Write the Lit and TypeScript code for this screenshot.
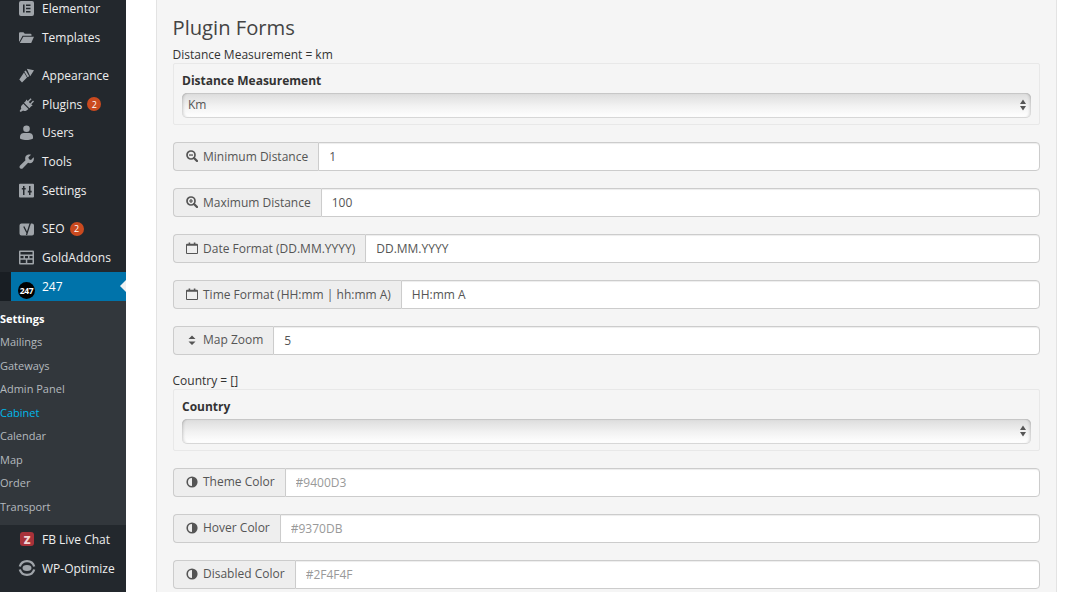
import { LitElement, html, css, svg } from "lit";
import { customElement } from "lit/decorators.js";

const menuIcons: Record<string, unknown> = {
  elementor: svg`<path fill-rule="evenodd" d="M2 0h11a2 2 0 0 1 2 2v11a2 2 0 0 1-2 2H2a2 2 0 0 1-2-2V2a2 2 0 0 1 2-2zM4 3.500v8h1.600v-8zM7 3.500v1.600h4.500V3.500zM7 6.700v1.600h4.500V6.700zM7 9.900v1.600h4.500V9.900z"/>`,
  templates: svg`<path d="M0 3.200a1 1 0 0 1 1-1h3.400l1.400 1.500h5.700a1 1 0 0 1 1 1v1.100H3.600L0.500 11.500H0zM4.300 6.800H15L12.200 13H0.800z"/>`,
  appearance: svg`<path d="M7.800 .8 15 2.300 11.200 8.200zM6.800 2.400 10.200 8.300 8.600 9.200 5.300 3.600zM5 4.500 8 9.500 3 14.500 .3 11.500z"/>`,
  plugins: svg`<path d="M12.600 2.200 9.800 5 11.200 6.400 14 3.600 15 4.600 12.300 7.300 13.700 8.700 12.200 9.300 10.400 11.200 5 5.800 6.800 4 7.400 2.500 8.800 3.900 11.600 1.200zM4.300 6.800 9.500 12 7.500 13.500C6 14.400 5 14.100 4.200 13.400L1.600 15 .6 14 2.300 11.500C1.800 10.700 1.800 9.700 2.600 8.600z"/>`,
  users: svg`<circle cx="7.500" cy="3.800" r="3.300"/><path d="M1 11.500c0-2.400 2.200-3.500 3.700-3.500h5.600c1.500 0 3.700 1.100 3.700 3.500v1.800c0 .6-2 1.700-6.500 1.700S1 13.900 1 13.300z"/>`,
  tools: svg`<path d="M14.600 3.300 12 5.900 10 5.300 9.400 3.300 12 .7C10.300.1 8.300.5 7.300 1.600 6 2.900 5.900 4.700 6.500 6.200L1.100 11.500C.3 12.300.3 13.500 1.100 14.200 1.900 15 3.100 15 3.800 14.200L9.100 8.800C10.600 9.500 12.400 9.300 13.700 8 14.900 6.800 15.200 5 14.600 3.300z"/>`,
  settings: svg`<path fill-rule="evenodd" d="M1 .8h13a1 1 0 0 1 1 1v11.600a1 1 0 0 1-1 1H1a1 1 0 0 1-1-1V1.800a1 1 0 0 1 1-1zM4 3v2H2.800v1.600H4V12h1.500V6.600h1.200V5H5.500V3zM10 3v4.800H8.800v1.600H10V12h1.500V9.400h1.200V7.800h-1.200V3z"/>`,
  seo: svg`<path d="M2.500 2.500H13A2 2 0 0 1 15 4.500V12.500A2 2 0 0 1 13 14.500H2.500A2 2 0 0 1 .5 12.500V4.500A2 2 0 0 1 2.500 2.500z"/><path d="M4.800 5.500 7.800 11.500M11.800 .5 7.500 14" fill="none" stroke="#23282d" stroke-width="1.300"/>`,
  gold: svg`<path fill-rule="evenodd" d="M1 .5h13a1 1 0 0 1 1 1v12a1 1 0 0 1-1 1H1a1 1 0 0 1-1-1v-12a1 1 0 0 1 1-1zM1.500 2v2.500h12V2zM1.500 6v2.200h3V6zM6 6v2.200h3V6zM10.500 6v2.200h3V6zM1.500 9.700V13h5.300V9.700zM8.300 9.700V13h5.200V9.700z"/>`,
};

const glyphs: Record<string, unknown> = {
  out: svg`<circle cx="5" cy="5" r="4" fill="none" stroke="currentColor" stroke-width="1.700"/><path d="M8 8 11 11" stroke="currentColor" stroke-width="2.300" stroke-linecap="round"/><path d="M3 4.400h4v1.300H3z"/>`,
  in: svg`<circle cx="5" cy="5" r="4" fill="none" stroke="currentColor" stroke-width="1.700"/><path d="M8 8 11 11" stroke="currentColor" stroke-width="2.300" stroke-linecap="round"/><path d="M3 4.400h1.400V3h1.200v1.400H7v1.200H5.600V7H4.400V5.600H3z"/>`,
  cal: svg`<path fill-rule="evenodd" d="M1 1.800H2.600V.4H4.200V1.800H7.800V.4H9.400V1.800H11a1 1 0 0 1 1 1V11a1 1 0 0 1-1 1H1a1 1 0 0 1-1-1V2.800a1 1 0 0 1 1-1zM1 3.700V11h10V3.700z"/>`,
  sort: svg`<path d="M6 1.500 9.500 5h-7zM6 11 2.500 7.500h7z"/>`,
  half: svg`<path fill-rule="evenodd" d="M6 .4a5.600 5.600 0 1 1 0 11.200A5.600 5.600 0 0 1 6 .4zM6 2a4 4 0 0 0 0 8z"/>`,
};

@customElement("side-menu")
class SideMenu extends LitElement {
  static styles = css`
    :host { display: block; width: 126px; flex: none; background: #23282d; height: 592px; overflow: hidden; font-family: "Open Sans", sans-serif; }
    .list { display: flex; flex-direction: column; margin-top: -6px; }
    .item { display: flex; align-items: center; height: 28.750px; flex: none; padding-left: 19px; gap: 8px; font-size: 12px; color: #eee; white-space: nowrap; }
    .item svg { width: 15px; height: 15px; fill: #a0a5aa; flex: none; }
    .gap { margin-top: 9.600px; }
    .badge { display: inline-flex; align-items: center; justify-content: center; width: 14px; height: 14px; border-radius: 50%; background: #ca4a1f; color: #fff; font-size: 9px; margin-left: -3px; }
    .cur-wrap { display: flex; height: 29px; flex: none; }
    .cur-strip { width: 11px; background: #191e23; flex: none; }
    .cur { flex: 1; position: relative; background: #0073aa; color: #fff; display: flex; align-items: center; gap: 7px; padding-left: 7px; font-size: 12px; }
    .cur::after { content: ""; position: absolute; right: 0; top: 8px; border: 6.500px solid transparent; border-right-color: #f1f1f1; border-left: 0; }
    .logo { width: 17px; height: 17px; border-radius: 50%; background: #000; color: #fff; font-size: 8.500px; font-weight: 700; display: flex; align-items: center; justify-content: center; margin-top: 9px; letter-spacing: -.3px; }
    .sub { background: #32373c; padding: 5.600px 0 7px; display: flex; flex-direction: column; flex: none; }
    .sub div { height: 23.500px; line-height: 23.500px; font-size: 11px; color: #b4b9be; white-space: nowrap; }
    .sub .b { color: #fff; font-weight: 700; }
    .sub .a { color: #00b9eb; }
    .chat { width: 14px; height: 14px; margin-left: 1px; border-radius: 3px; background: #a8323a; color: #f3d5d5; font-size: 11px; font-weight: 800; display: flex; align-items: center; justify-content: center; flex: none; }
    .item svg.wpo { width: 18px; height: 18px; margin-left: -1px; margin-right: -2px; }
    .wpo path { fill: none; stroke: #a0a5aa; stroke-width: 2.300; }
  `;
  private row(label: string, icon: string, badge = "", cls = "") {
    return html`<div class="item ${cls}"><svg viewBox="0 0 15 15">${menuIcons[icon]}</svg><span>${label}</span>${badge ? html`<span class="badge">${badge}</span>` : ""}</div>`;
  }
  render() {
    return html`<div class="list">
      ${this.row("Elementor", "elementor")}
      ${this.row("Templates", "templates")}
      ${this.row("Appearance", "appearance", "", "gap")}
      ${this.row("Plugins", "plugins", "2")}
      ${this.row("Users", "users")}
      ${this.row("Tools", "tools")}
      ${this.row("Settings", "settings")}
      ${this.row("SEO", "seo", "2", "gap")}
      ${this.row("GoldAddons", "gold")}
      <div class="cur-wrap"><div class="cur-strip"></div><div class="cur"><span class="logo">247</span><span>247</span></div></div>
      <div class="sub">
        <div class="b">Settings</div><div>Mailings</div><div>Gateways</div><div>Admin Panel</div>
        <div class="a">Cabinet</div><div>Calendar</div><div>Map</div><div>Order</div><div>Transport</div>
      </div>
      <div class="item"><span class="chat">Z</span><span>FB Live Chat</span></div>
      <div class="item"><svg class="wpo" viewBox="0 0 18 18"><path d="M1.800 7.500A7.500 7.500 0 0 1 16.200 7.500"/><path d="M1.800 10.500A7.500 7.500 0 0 0 16.200 10.500"/><ellipse cx="9" cy="9" rx="4.500" ry="3"/></svg><span>WP-Optimize</span></div>
    </div>`;
  }
}

@customElement("input-row")
class InputRow extends LitElement {
  static properties = { label: {}, icon: {}, value: {}, placeholder: {} };
  label = ""; icon = ""; value = ""; placeholder = "";
  static styles = css`
    :host { display: flex; height: 29px; font-family: "Open Sans", sans-serif; font-size: 12px; color: #555; }
    .addon { display: flex; align-items: center; gap: 5px; background: #eee; border: 1px solid #ccc; border-right: 0; border-radius: 4px 0 0 4px; padding: 0 10px 0 12px; white-space: nowrap; flex: none; }
    .addon svg { width: 12px; height: 12px; fill: currentColor; flex: none; position: relative; top: -1px; }
    .addon span { position: relative; top: -1px; }
    :host([low]) .addon span { top: 0; }
    input { flex: 1; min-width: 0; box-sizing: border-box; height: 29px; border: 1px solid #ccc; border-radius: 0 4px 4px 0; background: #fff; padding: 0 10px 1px; font: inherit; color: #555; outline: 0; box-shadow: inset 0 1px 1px rgba(0,0,0,.075); }
    input::placeholder { color: #999; opacity: 1; }
  `;
  render() {
    return html`<div class="addon"><svg viewBox="0 0 12 12">${glyphs[this.icon]}</svg><span>${this.label}</span></div><input readonly .value=${this.value} placeholder=${this.placeholder} />`;
  }
}

@customElement("select-well")
class SelectWell extends LitElement {
  static properties = { note: {}, label: {}, value: {} };
  note = ""; label = ""; value = "";
  static styles = css`
    :host { display: block; font-family: "Open Sans", sans-serif; font-size: 12px; color: #333; }
    .note { height: 18px; line-height: 20px; margin-left: -.5px; }
    .well { box-sizing: border-box; height: 62px; border: 1px solid #e8e8e8; border-radius: 2px; padding: 8px 8px 0 8px; }
    .lab { font-weight: 700; height: 21px; line-height: 17px; }
    .sel { position: relative; height: 24px; }
    select { appearance: none; -webkit-appearance: none; width: 100%; height: 24px; box-sizing: border-box; border: 0; border-radius: 5px; padding: 0 6px 2px; font: inherit; color: #555; outline: 0; background: linear-gradient(#dcdcdc, #f2f2f2 55%, #fff); box-shadow: inset 3px 0 3px -2px rgba(0,0,0,.18), inset -3px 0 3px -2px rgba(0,0,0,.18), inset 0 1px 1px rgba(0,0,0,.1), 0 1px 0 rgba(0,0,0,.12); }
    .sel svg { position: absolute; right: 4px; top: 6px; width: 8px; height: 12px; fill: #555; pointer-events: none; }
  `;
  render() {
    return html`<div class="note">${this.note}</div>
      <div class="well"><div class="lab">${this.label}</div>
        <div class="sel"><select><option>${this.value}</option></select>
        <svg viewBox="0 0 8 12"><path d="M4 .5 7 5H1zM4 11.500 1 7h6z"/></svg></div></div>`;
  }
}

@customElement("app-root")
class AppRoot extends LitElement {
  static styles = css`
    :host { display: flex; height: 592px; overflow: hidden; background: #fff; font-family: "Open Sans", sans-serif; }
    .panel { box-sizing: border-box; width: 901px; height: 592px; margin-left: 30px; background: #f5f5f5; border-left: 1px solid #e3e3e3; border-right: 1px solid #e3e3e3; padding: 0 16px; }
    h1 { font-size: 20.200px; font-weight: 400; color: #444; margin: 0 0 0 -.5px; padding-top: 13px; height: 32px; line-height: 28px; }
    .f { margin-top: 17px; }
    .s2 { margin-top: 16px; }
  `;
  render() {
    return html`<side-menu></side-menu>
      <div class="panel">
        <h1>Plugin Forms</h1>
        <select-well note="Distance Measurement = km" label="Distance Measurement" value="Km"></select-well>
        <input-row low class="f" label="Minimum Distance" icon="out" value="1"></input-row>
        <input-row low class="f" label="Maximum Distance" icon="in" value="100"></input-row>
        <input-row low class="f" label="Date Format (DD.MM.YYYY)" icon="cal" value="DD.MM.YYYY"></input-row>
        <input-row low class="f" label="Time Format (HH:mm | hh:mm A)" icon="cal" value="HH:mm A"></input-row>
        <input-row class="f" label="Map Zoom" icon="sort" value="5"></input-row>
        <select-well class="s2" note="Country = []" label="Country" value=""></select-well>
        <input-row class="f" label="Theme Color" icon="half" placeholder="#9400D3"></input-row>
        <input-row class="f" label="Hover Color" icon="half" placeholder="#9370DB"></input-row>
        <input-row class="f" label="Disabled Color" icon="half" placeholder="#2F4F4F"></input-row>
      </div>`;
  }
}
